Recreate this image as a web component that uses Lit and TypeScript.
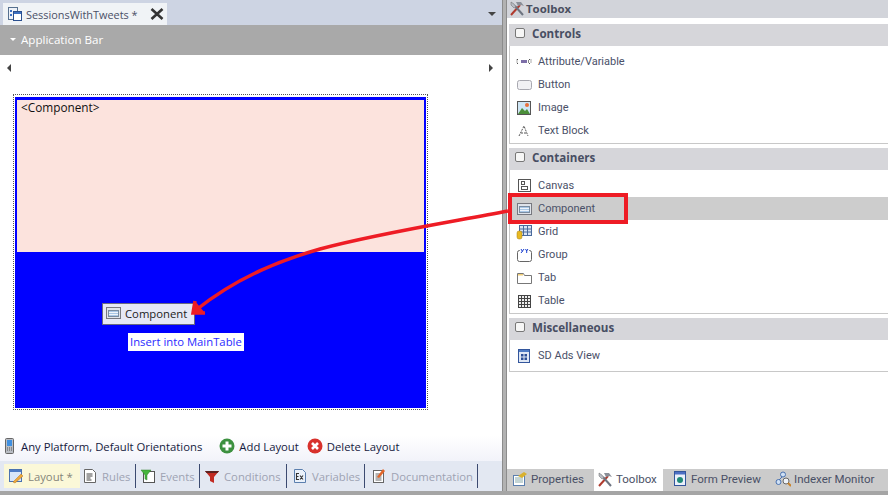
import { css, html, LitElement, svg } from 'lit';
import { customElement } from 'lit/decorators.js';

const icons = {
  doc: svg`<rect x="1.5" y="1.5" width="9" height="12" fill="#eef2f8" stroke="#56708f"/><rect x="6.5" y="5.5" width="8" height="9" fill="#fff" stroke="#2a4f8f"/><rect x="7" y="6" width="7" height="2" fill="#3c6fc0"/><rect x="3" y="4" width="2" height="2" fill="#3c6fc0"/><rect x="3" y="8" width="2" height="2" fill="#3c6fc0"/>`,
  tools: svg`<path d="M2 15 L11 5" stroke="#b03a2e" stroke-width="2"/><path d="M14 15 L6 6" stroke="#6d7480" stroke-width="2"/><path d="M7 2 L12 2 L15 6 L12 5 L9 6 Z" fill="#8a8f98"/><path d="M2 2 L5 4 L7 7 L5 8 L2 5 Z" fill="#b8bcc4" stroke="#666" stroke-width=".5"/>`,
  attr: svg`<path d="M1 5.5h2M1 5.5v4M1 9.5h2M13 5.5h2M15 5.5v4M13 9.5h2" stroke="#555" stroke-dasharray="1 1" fill="none"/><rect x="5" y="6" width="6" height="3" fill="#7d6fa8"/><rect x="12" y="6" width="1" height="3" fill="#888"/>`,
  button: svg`<rect x="1.5" y="3.5" width="14" height="9" rx="2" fill="#f1f1f4" stroke="#a8a8b0"/>`,
  image: svg`<rect x="1.5" y="1.5" width="13" height="13" fill="#cfe6f5" stroke="#555"/><path d="M2 14 L6 8 L9 11 L11 9 L14 14 Z" fill="#4b8f3a"/><circle cx="11" cy="5" r="2" fill="#e9703a"/>`,
  text: svg`<path d="M3 13 L8 3 L12 13 M5 10 H11" fill="none" stroke="#555" stroke-dasharray="2 1"/>`,
  canvas: svg`<rect x="2.5" y="1.5" width="12" height="12" fill="#fff" stroke="#555"/><rect x="5.5" y="3.5" width="3" height="3" fill="none" stroke="#555"/><rect x="5.5" y="8.5" width="6" height="3" fill="none" stroke="#555"/>`,
  component: svg`<rect x="1.5" y="2.5" width="14" height="11" fill="#dfe3ea" stroke="#77787f"/><rect x="3.5" y="5.5" width="10" height="6" fill="#a9c7e6" stroke="#7a8ca0"/><path d="M4 7.5h9M4 9.5h9" stroke="#eef3fa"/>`,
  grid: svg`<rect x="3.5" y="1.5" width="12" height="10" fill="#dbe5f3" stroke="#4a6a9c"/><path d="M7.5 2v9M11.5 2v9M4 5h11M4 8h11" stroke="#4a6a9c"/><rect x="1" y="7" width="5" height="8" rx="2" fill="#e8b923" stroke="#a77f10" stroke-width=".5"/>`,
  group: svg`<rect x="1.5" y="3.5" width="14" height="11" rx="2" fill="#fff" stroke="#666"/><rect x="4" y="1" width="9" height="5" fill="#fff"/><path d="M5 2l1.5 2.5M8 2l-3 4M9.5 2l1.2 2 1.2-2M10.7 4v2" stroke="#1a3fd0" fill="none"/>`,
  tab: svg`<path d="M1.5 3.5h6l1 2h7v8h-14z" fill="#fff" stroke="#777"/><path d="M2 4h5v1.500h-5z" fill="#f2cf77"/>`,
  table: svg`<rect x="2.500" y="2.500" width="12" height="12" fill="#eee" stroke="#444"/><path d="M5.500 3v11M8.500 3v11M11.500 3v11M3 5.500h11M3 8.500h11M3 11.500h11" stroke="#444"/>`,
  ads: svg`<rect x="2.500" y="1.500" width="11" height="13" fill="#dfe8f5" stroke="#33569c"/><rect x="3" y="2" width="10" height="2" fill="#4d7bc4"/><path d="M5 6h2.500v2.500h-2.500zM8.500 6h2.500v2.500h-2.500zM5 9.500h2.500v2.500h-2.500zM8.500 9.500h2.500v2.500h-2.500z" fill="#2b4f96"/>`,
  phone: svg`<rect x="3.500" y="0.500" width="8" height="15" rx="1" fill="#b9bdc4" stroke="#666"/><rect x="5" y="2" width="5" height="6" fill="#3f8fe0"/><path d="M5 10h5M5 12h5" stroke="#555" stroke-dasharray="1 1"/>`,
  add: svg`<circle cx="8" cy="8" r="7.500" fill="#3d9140"/><path d="M8 3.500v9M3.500 8h9" stroke="#fff" stroke-width="3"/>`,
  del: svg`<circle cx="8" cy="8" r="7.500" fill="#d8312c"/><path d="M5 5l6 6M11 5l-6 6" stroke="#fff" stroke-width="2.600"/>`,
  layout: svg`<rect x="1.500" y="1.500" width="12" height="12" fill="#d8e6f8" stroke="#4a72b0"/><rect x="2" y="2" width="11" height="2" fill="#4d7bc4"/><path d="M5 14 L13 6 L15 8 L7 15 Z" fill="#eda83a" stroke="#b87716" stroke-width=".5"/>`,
  rules: svg`<path d="M2.500 1.500h8l3 3v10h-11z" fill="#fff" stroke="#666"/><path d="M4.500 6h6M4.500 8h6M4.500 10h4M4.500 12h5" stroke="#444"/>`,
  events: svg`<rect x="3.500" y="3.500" width="11" height="11" fill="#fff" stroke="#555"/><path d="M1 2h10l-4 5v5l-2-1V7z" fill="#46b53c" stroke="#2d7f28" stroke-width=".5"/>`,
  filter: svg`<path d="M1 3h14l-5 6v6l-4-2V9z" fill="#c22a22"/><path d="M1 3h14l-1.500 2h-11z" fill="#5b2220"/>`,
  vars: svg`<path d="M2.500 1.500h8l3 3v10h-11z" fill="#eaf1fa" stroke="#5b7fae"/><path d="M7 5.500H4.500v6H7M4.500 8.500H6.500M8 7.500l3 4M11 7.500l-3 4" fill="none" stroke="#333" stroke-width="1.100"/>`,
  docs: svg`<rect x="2.500" y="2.500" width="10" height="12" fill="#fff" stroke="#666"/><path d="M4.500 6h6M4.500 8h6M4.500 10h6M4.500 12h6" stroke="#666"/><path d="M6 9 L12 1 L14 3 L8 10 Z" fill="#e2662a"/>`,
  props: svg`<rect x="1.500" y="4.500" width="11" height="10" fill="#fff" stroke="#5b7fae"/><path d="M3 7h8M3 9h8M3 11h8" stroke="#8aa"/><path d="M6 5 L12 1 L15 3 L10 7 Z" fill="#d9b12e"/>`,
  preview: svg`<rect x="2.500" y="0.500" width="11" height="14" fill="#eaf0fb" stroke="#33569c"/><rect x="3" y="1" width="10" height="2.500" fill="#4d6fc4"/><circle cx="8" cy="9" r="3" fill="#1f8a78"/>`,
  indexer: svg`<circle cx="8" cy="3.500" r="2.500" fill="#cfe0f4" stroke="#4a72b0"/><circle cx="3.500" cy="11" r="2.500" fill="#cfe0f4" stroke="#4a72b0"/><path d="M7 6 L4 9" stroke="#4a72b0"/><circle cx="11" cy="10" r="3" fill="#eef3fa" stroke="#666"/><path d="M13 12l3 3" stroke="#c9822a" stroke-width="2"/>`,
};

type IconName = keyof typeof icons;

const sections: { title: string; height: number; items: { label: string; icon: IconName; selected?: boolean }[] }[] = [
  {
    title: 'Controls',
    height: 98,
    items: [
      { label: 'Attribute/Variable', icon: 'attr' },
      { label: 'Button', icon: 'button' },
      { label: 'Image', icon: 'image' },
      { label: 'Text Block', icon: 'text' },
    ],
  },
  {
    title: 'Containers',
    height: 144,
    items: [
      { label: 'Canvas', icon: 'canvas' },
      { label: 'Component', icon: 'component', selected: true },
      { label: 'Grid', icon: 'grid' },
      { label: 'Group', icon: 'group' },
      { label: 'Tab', icon: 'tab' },
      { label: 'Table', icon: 'table' },
    ],
  },
  {
    title: 'Miscellaneous',
    height: 32,
    items: [{ label: 'SD Ads View', icon: 'ads' }],
  },
];

const editorTabs: { label: string; icon: IconName; width: number; pad: number; active?: boolean }[] = [
  { label: 'Layout *', icon: 'layout', width: 76, pad: 4, active: true },
  { label: 'Rules', icon: 'rules', width: 56, pad: 2 },
  { label: 'Events', icon: 'events', width: 64, pad: 4 },
  { label: 'Conditions', icon: 'filter', width: 87, pad: 4 },
  { label: 'Variables', icon: 'vars', width: 78, pad: 5 },
  { label: 'Documentation', icon: 'docs', width: 113, pad: 6 },
];

const paneTabs: { label: string; icon: IconName; width: number; active?: boolean }[] = [
  { label: 'Properties', icon: 'props', width: 85 },
  { label: 'Toolbox', icon: 'tools', width: 69, active: true },
  { label: 'Form Preview', icon: 'preview', width: 103 },
  { label: 'Indexer Monitor', icon: 'indexer', width: 111 },
];

const icon = (name: IconName) => html`<svg class="icon" viewBox="0 0 16 16" width="16" height="16">${icons[name]}</svg>`;

@customElement('app-root')
export class AppRoot extends LitElement {
  static styles = css`
    :host {
      display: block;
      position: relative;
      width: 888px;
      height: 495px;
      overflow: hidden;
      background: #fff;
      font-family: 'Open Sans', 'Noto Sans', sans-serif;
      font-size: 11.3px;
      color: #3f4660;
      white-space: nowrap;
    }

    .frame {
      display: grid;
      grid-template-columns: 502px 5px 381px;
      height: 491px;
    }

    .splitter {
      background: #b2b2b2;
      border-left: 1px solid #8c8c8c;
      border-right: 1px solid #8c8c8c;
    }

    .left,
    .right {
      display: flex;
      flex-direction: column;
      min-height: 0;
    }

    .doc-strip {
      display: flex;
      align-items: flex-end;
      justify-content: space-between;
      height: 25px;
      padding-left: 3px;
      box-sizing: border-box;
      background: #cdd4e3;
    }

    .doc-tab {
      display: flex;
      align-items: center;
      gap: 3px;
      width: 164px;
      height: 22px;
      box-sizing: border-box;
      padding-left: 4px;
      background: #f0f3f6;
      color: #4a5066;
      font-size: 10.9px;
    }

    .doc-close {
      width: 14px;
      height: 14px;
      margin-left: 9px;
    }

    .doc-menu {
      width: 0;
      height: 0;
      margin: 0 6px 9px 0;
      border: 4px solid transparent;
      border-top-color: #444;
      border-bottom: 0;
    }

    .app-bar {
      display: flex;
      align-items: center;
      gap: 5px;
      height: 30px;
      box-sizing: border-box;
      padding: 0 0 2px 10px;
      background: #a9a9a9;
      color: #fff;
      font-size: 11.6px;
    }

    .caret {
      width: 0;
      height: 0;
      border: 3px solid transparent;
      border-top-color: #fff;
      border-bottom: 0;
    }

    .canvas {
      flex: 1;
      display: flex;
      flex-direction: column;
      min-height: 0;
      background: #fff;
    }

    .scroll-row {
      display: flex;
      justify-content: space-between;
      align-items: center;
      height: 25px;
      padding: 0 9px 0 7px;
      box-sizing: border-box;
    }

    .arrow-l,
    .arrow-r {
      width: 0;
      height: 0;
      border: 4px solid transparent;
    }

    .arrow-l {
      border-left: 0;
      border-right-color: #444;
    }

    .arrow-r {
      border-right: 0;
      border-left-color: #444;
    }

    .design {
      width: 415px;
      height: 316px;
      margin: 14px 0 0 13px;
      box-sizing: border-box;
      padding: 2px 1px 1px 1px;
      border: 1px dotted #555;
    }

    .design-inner {
      display: flex;
      flex-direction: column;
      height: 100%;
      box-sizing: border-box;
      border: 2px solid #0000ff;
      background: #0000ff;
    }

    .placeholder {
      height: 152px;
      margin-top: 1px;
      padding: 0 4px;
      box-sizing: border-box;
      background: #fce3dd;
      color: #111;
      font-size: 11.8px;
      line-height: 14px;
    }

    .drop {
      flex: 1;
      display: flex;
      flex-direction: column;
      align-items: flex-start;
      padding: 51px 0 0 85px;
    }

    .drag {
      display: flex;
      align-items: center;
      gap: 4px;
      width: 93px;
      height: 22px;
      box-sizing: border-box;
      padding: 0 0 2px 2px;
      border: 1px solid #6a6a80;
      background: #e6e8f6;
      color: #222;
    }

    .hint {
      margin: 8px 0 0 26px;
      padding: 0 2px;
      height: 18px;
      line-height: 18px;
      background: #fff;
      color: #2a2aff;
    }

    .actions {
      display: flex;
      align-items: center;
      height: 26px;
      padding: 0 0 4px 2px;
      box-sizing: border-box;
      background: linear-gradient(#fff, #f2f3fa);
      color: #151a40;
    }

    .actions span {
      display: flex;
      align-items: center;
      gap: 4px;
    }

    .actions span:first-child {
      gap: 3px;
      margin-right: 17px;
    }

    .actions span:nth-child(2) {
      margin-right: 8px;
    }

    .editor-tabs {
      display: flex;
      align-items: center;
      height: 30px;
      padding-left: 4px;
      background: #e3e8f2;
      color: #9ea3b3;
    }

    .editor-tab {
      display: flex;
      align-items: center;
      gap: 4px;
      height: 24px;
      box-sizing: border-box;
      border-right: 1px solid #3c4a70;
    }

    .editor-tab.active {
      background: #fbf8d8;
      color: #85857a;
      border-right-color: transparent;
    }

    .toolbox-title {
      display: flex;
      align-items: center;
      gap: 1px;
      height: 18px;
      box-sizing: border-box;
      padding: 0 0 2px 2px;
      background: #d2d4da;
      font-weight: 700;
      font-size: 11.4px;
      color: #4a4f60;
    }

    .toolbox-body {
      flex: 1;
      display: flex;
      flex-direction: column;
      gap: 4px;
      padding: 6px 0 0 2px;
      background: #fff;
    }

    .section-head {
      display: flex;
      align-items: center;
      gap: 7px;
      height: 22px;
      box-sizing: border-box;
      padding: 0 0 4px 6px;
      background: #d6d6da;
      font-weight: 700;
      font-size: 11.6px;
      color: #484e63;
    }

    .check {
      width: 8px;
      height: 8px;
      border: 1px solid #777;
      border-radius: 2px;
      background: #f6f6f6;
    }

    .section-body {
      box-sizing: border-box;
      padding-top: 4px;
      border: 1px solid #c8c8c8;
      border-top: 0;
      border-right: 0;
    }

    .item {
      display: flex;
      align-items: center;
      gap: 6px;
      height: 23px;
      padding-left: 6px;
      font-family: Roboto, 'Open Sans', sans-serif;
      font-size: 11px;
      color: #4a5068;
    }

    .item.selected {
      background: #cdcdcd;
    }

    .pane-tabs {
      display: flex;
      align-items: center;
      height: 22px;
      padding-left: 2px;
      background: #cbcbcb;
      color: #4a5066;
      font-family: Roboto, 'Open Sans', sans-serif;
      font-size: 11.5px;
    }

    .pane-tab {
      display: flex;
      align-items: center;
      gap: 3px;
      height: 22px;
      padding: 0 0 2px 3px;
      box-sizing: border-box;
    }

    .pane-tab.active {
      margin-right: 6px;
      background: #fff;
    }

    .icon {
      flex: none;
      display: block;
    }

    .status {
      height: 4px;
      background: #a5a5a5;
    }

    .overlay {
      position: absolute;
      inset: 0;
      pointer-events: none;
    }
  `;

  render() {
    return html`
      <div class="frame">
        <div class="left">
          <div class="doc-strip">
            <div class="doc-tab">
              ${icon('doc')}
              <span>SessionsWithTweets *</span>
              <svg class="doc-close" viewBox="0 0 14 14"><path d="M1.500 2l11 10M12.500 2l-11 10" stroke="#333" stroke-width="2.600"/></svg>
            </div>
            <div class="doc-menu"></div>
          </div>
          <div class="app-bar"><i class="caret"></i>Application Bar</div>
          <div class="canvas">
            <div class="scroll-row"><i class="arrow-l"></i><i class="arrow-r"></i></div>
            <div class="design">
              <div class="design-inner">
                <div class="placeholder">&lt;Component&gt;</div>
                <div class="drop">
                  <div class="drag">${icon('component')}Component</div>
                  <div class="hint">Insert into MainTable</div>
                </div>
              </div>
            </div>
          </div>
          <div class="actions">
            <span>${icon('phone')}Any Platform, Default Orientations</span>
            <span>${icon('add')}Add Layout</span>
            <span>${icon('del')}Delete Layout</span>
          </div>
          <div class="editor-tabs">
            ${editorTabs.map(
              (t) => html`<div class="editor-tab ${t.active ? 'active' : ''}" style="width:${t.width}px;padding-left:${t.pad}px">${icon(t.icon)}${t.label}</div>`,
            )}
          </div>
        </div>
        <div class="splitter"></div>
        <div class="right">
          <div class="toolbox-title">${icon('tools')}Toolbox</div>
          <div class="toolbox-body">
            ${sections.map(
              (s) => html`
                <div>
                  <div class="section-head"><i class="check"></i>${s.title}</div>
                  <div class="section-body" style="height:${s.height}px">
                    ${s.items.map(
                      (it) => html`<div class="item ${it.selected ? 'selected' : ''}">${icon(it.icon)}${it.label}</div>`,
                    )}
                  </div>
                </div>
              `,
            )}
          </div>
          <div class="pane-tabs">
            ${paneTabs.map(
              (t) => html`<div class="pane-tab ${t.active ? 'active' : ''}" style="width:${t.width}px">${icon(t.icon)}${t.label}</div>`,
            )}
          </div>
        </div>
      </div>
      <div class="status"></div>
      <svg class="overlay" viewBox="0 0 888 495" width="888" height="495">
        <rect x="510" y="195" width="116" height="27" fill="none" stroke="#ee1c25" stroke-width="4"/>
        <path d="M508 211 C 445 223, 375 234, 320 249 C 285 259, 240 275, 196 310" fill="none" stroke="#ee1c25" stroke-width="3.500"/>
        <path d="M195 301 L193 313 L205 313" fill="#ee1c25" stroke="#ee1c25" stroke-width="3.500"/>
      </svg>
    `;
  }
}
